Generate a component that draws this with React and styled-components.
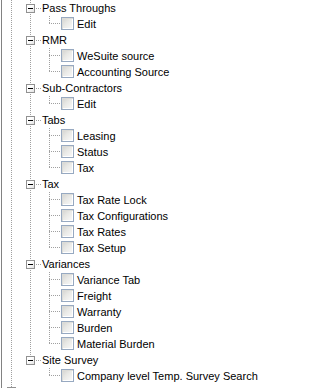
import React from "react";
import styled, { createGlobalStyle } from "styled-components";

const LINE = "#a0a0a0";

const GlobalStyle = createGlobalStyle`
  html, body {
    margin: 0;
    padding: 0;
    background: #fff;
  }
  body {
    font-family: "Liberation Sans", Arial, sans-serif;
    font-size: 11px;
    color: #000;
  }
`;

const groups = [
  { label: "Pass Throughs", items: ["Edit"] },
  { label: "RMR", items: ["WeSuite source", "Accounting Source"] },
  { label: "Sub-Contractors", items: ["Edit"] },
  { label: "Tabs", items: ["Leasing", "Status", "Tax"] },
  {
    label: "Tax",
    items: ["Tax Rate Lock", "Tax Configurations", "Tax Rates", "Tax Setup"],
  },
  {
    label: "Variances",
    items: ["Variance Tab", "Freight", "Warranty", "Burden", "Material Burden"],
  },
  { label: "Site Survey", items: ["Company level Temp. Survey Search"] },
];

const Panel = styled.div`
  margin-left: 1px;
  border-left: 1px solid #828282;
  height: 100vh;
  overflow: hidden;
  background: #fff;
`;

const Row = styled.div`
  display: flex;
  align-items: flex-start;
  height: 16px;
  white-space: nowrap;
`;

// one indent column of the tree, drawing its dotted guide lines as backgrounds
const dotsV = `repeating-linear-gradient(to bottom, ${LINE} 0 1px, transparent 1px 2px)`;
const dotsH = `repeating-linear-gradient(to right, ${LINE} 0 1px, transparent 1px 2px)`;

const Guide = styled.span`
  flex: none;
  display: flex;
  align-items: flex-start;
  width: ${(p) => p.$w || 19}px;
  height: 16px;
  background-repeat: no-repeat;
  background-image: ${(p) =>
    [p.$v && dotsV, p.$h && dotsH].filter(Boolean).join(", ") || "none"};
  background-size: ${(p) =>
    [
      p.$v && `1px ${p.$v === "top" ? p.$y || 8 : 16}px`,
      p.$h && `${(p.$w || 19) - 9}px 1px`,
    ]
      .filter(Boolean)
      .join(", ") || "auto"};
  background-position: ${(p) =>
    [p.$v && "9px 0", p.$h && `9px ${p.$y || 8}px`]
      .filter(Boolean)
      .join(", ") || "0 0"};
`;

const Expander = styled.span`
  box-sizing: border-box;
  width: 9px;
  height: 9px;
  margin: ${(p) => p.$top || 4}px 0 0 5px;
  border: 1px solid #919191;
  background: linear-gradient(135deg, #fff 40%, #e2e2e2);
  display: flex;
  align-items: center;
  justify-content: center;

  &::before {
    content: "";
    width: 5px;
    height: 1px;
    background: #000;
  }
`;

const Check = styled.span`
  flex: none;
  box-sizing: border-box;
  width: 13px;
  height: 13px;
  margin: 1px 3px 0 0;
  border: 1px solid #97a9c1;
  background: linear-gradient(135deg, #d2d2cf 0%, #e9e9e6 45%, #fbfbfb 100%);
  box-shadow: inset 1px 1px 0 #dcdcd8, inset -1px -1px 0 #fff;
`;

const Label = styled.span`
  line-height: 16px;
  margin-left: ${(p) => p.$ml || 0}px;
`;

const GroupRow = ({ label, last }) => (
  <Row>
    <Guide $v="full" />
    <Guide $w={20} $v={last ? "top" : "full"} $h>
      <Expander />
    </Guide>
    <Label $ml={1}>{label}</Label>
  </Row>
);

const ItemRow = ({ label, parentLast, last }) => (
  <Row>
    <Guide $v="full" />
    <Guide $v={parentLast ? null : "full"} />
    <Guide $w={21} $v={last ? "top" : "full"} $y={7} $h />
    <Check />
    <Label>{label}</Label>
  </Row>
);

export default function App() {
  return (
    <>
      <GlobalStyle />
      <Panel>
        {groups.map((g, gi) => {
          const groupLast = gi === groups.length - 1;
          return (
            <React.Fragment key={g.label + gi}>
              <GroupRow label={g.label} last={groupLast} />
              {g.items.map((item, ii) => (
                <ItemRow
                  key={item + ii}
                  label={item}
                  parentLast={groupLast}
                  last={ii === g.items.length - 1}
                />
              ))}
            </React.Fragment>
          );
        })}
        <Row>
          <Guide $v="top" $y={3}>
            <Expander $top={3} />
          </Guide>
        </Row>
      </Panel>
    </>
  );
}
